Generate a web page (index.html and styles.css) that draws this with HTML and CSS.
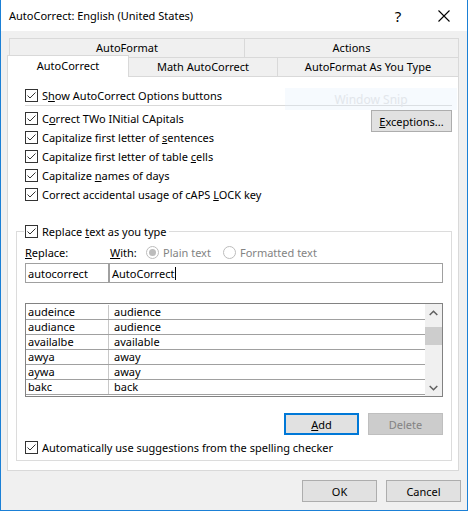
FILE: index.html
```html
<!DOCTYPE html>
<html>
<head>
<meta charset="utf-8">
<link rel="stylesheet" href="styles.css">
</head>
<body>
<div class="window">
  <div class="titlebar">
    <div class="title">AutoCorrect: English (United States)</div>
    <div class="cap help">?</div>
    <div class="cap close"><svg width="12" height="12" viewBox="0 0 12 12"><path d="M0.5 0.5L11.5 11.5M11.5 0.5L0.5 11.5" stroke="#000" stroke-width="1.1" fill="none"/></svg></div>
  </div>
  <div class="client">
    <div class="tabrow row1">
      <div class="tab t-af">AutoFormat</div>
      <div class="tab t-act">Actions</div>
    </div>
    <div class="tabrow row2">
      <div class="tab sel">AutoCorrect</div>
      <div class="tab t-math">Math AutoCorrect</div>
      <div class="tab t-afayt">AutoFormat As You Type</div>
    </div>
    <div class="panel">
      <div class="snip">Window Snip</div>
      <div class="top">
        <div class="check short"><svg class="cb" width="13" height="13" viewBox="0 0 13 13"><rect x="0.5" y="0.5" width="12" height="12" fill="#fff" stroke="#333"/><polyline points="2.5,6.5 5,9 10.5,3.5" fill="none" stroke="#333" stroke-width="1"/></svg><span>S<u>h</u>ow AutoCorrect Options buttons</span></div>
        <div class="sep"></div>
        <div class="opts">
          <div class="optlist">
            <div class="check"><svg class="cb" width="13" height="13" viewBox="0 0 13 13"><rect x="0.5" y="0.5" width="12" height="12" fill="#fff" stroke="#333"/><polyline points="2.5,6.5 5,9 10.5,3.5" fill="none" stroke="#333" stroke-width="1"/></svg><span>C<u>o</u>rrect TWo INitial CApitals</span></div>
            <div class="check"><svg class="cb" width="13" height="13" viewBox="0 0 13 13"><rect x="0.5" y="0.5" width="12" height="12" fill="#fff" stroke="#333"/><polyline points="2.5,6.5 5,9 10.5,3.5" fill="none" stroke="#333" stroke-width="1"/></svg><span>Capitalize first letter of <u>s</u>entences</span></div>
            <div class="check"><svg class="cb" width="13" height="13" viewBox="0 0 13 13"><rect x="0.5" y="0.5" width="12" height="12" fill="#fff" stroke="#333"/><polyline points="2.5,6.5 5,9 10.5,3.5" fill="none" stroke="#333" stroke-width="1"/></svg><span>Capitalize first letter of table <u>c</u>ells</span></div>
            <div class="check"><svg class="cb" width="13" height="13" viewBox="0 0 13 13"><rect x="0.5" y="0.5" width="12" height="12" fill="#fff" stroke="#333"/><polyline points="2.5,6.5 5,9 10.5,3.5" fill="none" stroke="#333" stroke-width="1"/></svg><span>Capitalize <u>n</u>ames of days</span></div>
            <div class="check"><svg class="cb" width="13" height="13" viewBox="0 0 13 13"><rect x="0.5" y="0.5" width="12" height="12" fill="#fff" stroke="#333"/><polyline points="2.5,6.5 5,9 10.5,3.5" fill="none" stroke="#333" stroke-width="1"/></svg><span>Correct accidental usage of cAPS <u>L</u>OCK key</span></div>
          </div>
          <div class="btn exc"><u>E</u>xceptions...</div>
        </div>
      </div>
      <fieldset class="group">
        <legend class="leg"><span class="check"><svg class="cb" width="13" height="13" viewBox="0 0 13 13"><rect x="0.5" y="0.5" width="12" height="12" fill="#fff" stroke="#333"/><polyline points="2.5,6.5 5,9 10.5,3.5" fill="none" stroke="#333" stroke-width="1"/></svg><span>Replace <u>t</u>ext as you type</span></span></legend>
        <div class="labels">
          <div class="lbl-rep"><u>R</u>eplace:</div>
          <div class="lbl-with"><u>W</u>ith:</div>
          <div class="radio r1"><svg width="13" height="13" viewBox="0 0 13 13"><circle cx="6.5" cy="6.5" r="6" fill="#fff" stroke="#bcbcbc"/><circle cx="6.5" cy="6.5" r="3.5" fill="#bcbcbc"/></svg><span>Plain text</span></div>
          <div class="radio"><svg width="13" height="13" viewBox="0 0 13 13"><circle cx="6.5" cy="6.5" r="6" fill="#fff" stroke="#bcbcbc"/></svg><span>Formatted text</span></div>
        </div>
        <div class="inputs">
          <div class="field f1">autocorrect</div>
          <div class="field f2">AutoCorrect<span class="caret"></span></div>
        </div>
        <div class="list">
          <div class="rows">
            <div class="row"><div class="c1">audeince</div><div class="c2">audience</div></div>
            <div class="row"><div class="c1">audiance</div><div class="c2">audience</div></div>
            <div class="row"><div class="c1">availalbe</div><div class="c2">available</div></div>
            <div class="row"><div class="c1">awya</div><div class="c2">away</div></div>
            <div class="row"><div class="c1">aywa</div><div class="c2">away</div></div>
            <div class="row"><div class="c1">bakc</div><div class="c2">back</div></div>
          </div>
          <div class="scroll">
            <div class="sbtn"><svg width="9" height="6" viewBox="0 0 9 6"><polyline points="0.7,5 4.5,1.2 8.3,5" fill="none" stroke="#606060" stroke-width="1.5"/></svg></div>
            <div class="thumb"></div>
            <div class="sspace"></div>
            <div class="sbtn"><svg width="9" height="6" viewBox="0 0 9 6"><polyline points="0.7,1 4.5,4.8 8.3,1" fill="none" stroke="#606060" stroke-width="1.5"/></svg></div>
          </div>
        </div>
        <div class="actions">
          <div class="btn focus"><u>A</u>dd</div>
          <div class="btn disabled">Delete</div>
        </div>
        <div class="check auto"><svg class="cb" width="13" height="13" viewBox="0 0 13 13"><rect x="0.5" y="0.5" width="12" height="12" fill="#fff" stroke="#333"/><polyline points="2.5,6.5 5,9 10.5,3.5" fill="none" stroke="#333" stroke-width="1"/></svg><span>Automatically use su<u>g</u>gestions from the spelling checker</span></div>
      </fieldset>
    </div>
    <div class="footer">
      <div class="btn">OK</div>
      <div class="btn">Cancel</div>
    </div>
  </div>
</div>
</body>
</html>
```
FILE: styles.css
```css
* { box-sizing: border-box; }
html, body { margin: 0; padding: 0; }
body {
  font-family: "Noto Sans", "Open Sans", sans-serif;
  font-size: 11px;
  color: #000;
  background: #f0f0f0;
}
u { text-decoration: underline; text-underline-offset: 1px; }

.window {
  width: 468px;
  height: 511px;
  border: 1px solid #1b80d6;
  border-top: none;
  background: #f0f0f0;
  display: flex;
  flex-direction: column;
}

.titlebar {
  height: 31px;
  background: #fff;
  display: flex;
  align-items: center;
  flex: none;
}
.title { flex: 1; padding-left: 8px; font-size: 11px; }
.cap {
  width: 46px;
  height: 31px;
  display: flex;
  align-items: center;
  justify-content: center;
}
.help { font-size: 15px; padding-top: 1px; }
.close svg { display: block; }

.client {
  padding: 7px 0 0 6px;
  flex: 1;
}

.tabrow { display: flex; height: 19px; }
.row1 { margin-left: 2px; }
.row2 { align-items: flex-end; }
.tab {
  height: 19px;
  border-top: 1px solid #d9d9d9;
  border-left: 1px solid #d9d9d9;
  background: #f0f0f0;
  text-align: center;
  line-height: 18px;
}
.t-af { width: 235px; }
.t-act { width: 215px; border-right: 1px solid #d9d9d9; }
.sel {
  width: 122px;
  height: 22px;
  margin-bottom: -1px;
  background: #fff;
  border-right: 1px solid #d9d9d9;
  line-height: 20px;
  position: relative;
  z-index: 1;
}
.t-math { width: 148px; border-left: none; }
.t-afayt { width: 182px; border-right: 1px solid #d9d9d9; }

.panel {
  width: 452px;
  height: 395px;
  background: #fff;
  border: 1px solid #d9d9d9;
  padding: 0 6px 0 8px;
  position: relative;
}

.snip {
  position: absolute;
  left: 277px;
  top: 11px;
  width: 172px;
  height: 22px;
  background: rgba(225, 238, 253, 0.3);
  color: #e2e6eb;
  font-size: 12px;
  display: flex;
  align-items: center;
  justify-content: center;
}

.top { padding: 10px 0 0 9px; }

.check {
  display: flex;
  align-items: center;
  height: 19px;
  white-space: nowrap;
}
.check .cb { flex: none; display: block; margin-right: 4px; }
.short { height: 17px; }

.sep {
  height: 1px;
  background: #d9d9d9;
  margin-top: 1px;
}

.opts {
  display: flex;
  justify-content: space-between;
  align-items: flex-start;
  margin-top: 3px;
}

.btn {
  width: 75px;
  height: 22px;
  background: #e1e1e1;
  border: 1px solid #adadad;
  display: flex;
  align-items: center;
  justify-content: center;
  line-height: 1;
}
.exc { width: 81px; margin-top: 1px; }
.focus { border: 2px solid #0078d7; }
.disabled { background: #cccccc; border-color: #bfbfbf; color: #838383; }

.group {
  margin: 20px 0 0 0;
  padding: 5px 8px 4px 8px;
  border: 1px solid #dcdcdc;
  min-width: 0;
}
.leg {
  padding: 0 2px 0 1px;
  margin-left: -1px;
}
.leg .check { height: 15px; }

.labels {
  display: flex;
  align-items: center;
  height: 16px;
}
.lbl-rep { width: 84px; }
.lbl-with { width: 37px; padding-left: 1px; }
.radio {
  display: flex;
  align-items: center;
  color: #838383;
}
.radio svg { display: block; margin-right: 4px; }
.r1 { width: 77px; }

.inputs {
  display: flex;
  margin-top: 3px;
  height: 20px;
}
.field {
  height: 20px;
  border: 1px solid #a0a0a0;
  padding-left: 2px;
  display: flex;
  align-items: center;
  white-space: nowrap;
}
.f1 { width: 84px; }
.f2 { flex: 1; }
.caret {
  display: inline-block;
  width: 1px;
  height: 13px;
  background: #000;
  margin-left: 1px;
}

.list {
  margin-top: 20px;
  height: 94px;
  border: 1px solid #828282;
  display: flex;
}
.rows { flex: 1; padding-top: 1px; }
.row {
  display: flex;
  height: 15px;
  border-bottom: 1px solid #a0a0a0;
  line-height: 14px;
}
.c1 {
  width: 83px;
  padding-left: 2px;
  border-right: 1px solid #c8c8c8;
}
.c2 { flex: 1; padding-left: 5px; }

.scroll {
  width: 17px;
  background: #f0f0f0;
  display: flex;
  flex-direction: column;
}
.sbtn {
  height: 17px;
  display: flex;
  align-items: center;
  justify-content: center;
}
.sbtn svg { display: block; }
.thumb {
  height: 18px;
  margin-top: 6px;
  background: #cdcdcd;
}
.sspace { flex: 1; }

.actions {
  display: flex;
  justify-content: flex-end;
  gap: 9px;
  margin-top: 16px;
}

.auto { height: 17px; margin-top: 4px; }

.footer {
  display: flex;
  justify-content: flex-end;
  gap: 9px;
  margin-top: 9px;
  padding-right: 6px;
}
```
